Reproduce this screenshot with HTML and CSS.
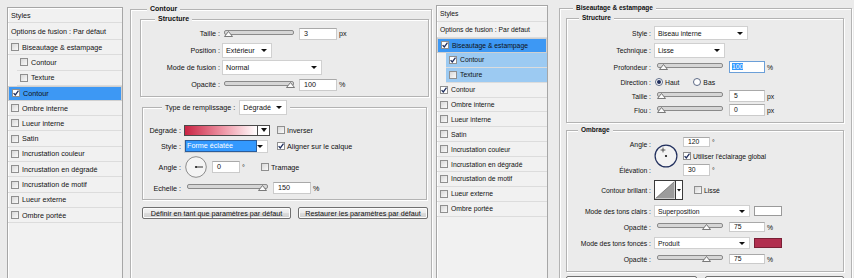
FILE: index.html
```html
<!DOCTYPE html>
<html lang="fr">
<head>
  <meta charset="UTF-8">
  <title>Style de calque</title>
  <link rel="stylesheet" href="styles.css">
</head>
<body>
<div class="screen">

  <!-- Dialogue 1 : Contour -->
  <div class="dialog d1">
    <div class="styles">
      <div class="st-head">Styles</div>
      <div class="st-opt">Options de fusion : Par défaut</div>
      <div class="st-row"><span class="cb"></span>Biseautage &amp; estampage</div>
      <div class="st-row sub"><span class="cb"></span>Contour</div>
      <div class="st-row sub"><span class="cb"></span>Texture</div>
      <div class="st-row sel"><span class="cb on"><svg viewBox="0 0 6 6"><path d="M0.6 3.1 L2.3 5 L5.5 0.7"/></svg></span>Contour</div>
      <div class="st-row"><span class="cb"></span>Ombre interne</div>
      <div class="st-row"><span class="cb"></span>Lueur interne</div>
      <div class="st-row"><span class="cb"></span>Satin</div>
      <div class="st-row"><span class="cb"></span>Incrustation couleur</div>
      <div class="st-row"><span class="cb"></span>Incrustation en dégradé</div>
      <div class="st-row"><span class="cb"></span>Incrustation de motif</div>
      <div class="st-row"><span class="cb"></span>Lueur externe</div>
      <div class="st-row"><span class="cb"></span>Ombre portée</div>
    </div>

    <div class="panel">
      <fieldset class="group outer">
        <legend>Contour</legend>
        <fieldset class="group struct">
          <legend>Structure</legend>
          <div class="form f-s1">
            <label>Taille :</label>
            <div class="ctl">
              <div class="slider w70" style="--v:0"><svg class="thumb" viewBox="0 0 9 6"><polygon points="0.5,5.5 4.5,0.5 8.5,5.5"/></svg></div>
              <span class="field w38">3</span><span class="unit">px</span>
            </div>
            <label>Position :</label>
            <div class="ctl"><span class="sel w50">Extérieur<i class="caret"></i></span></div>
            <label>Mode de fusion :</label>
            <div class="ctl"><span class="sel w100">Normal<i class="caret"></i></span></div>
            <label>Opacité :</label>
            <div class="ctl">
              <div class="slider w70" style="--v:1"><svg class="thumb" viewBox="0 0 9 6"><polygon points="0.5,5.5 4.5,0.5 8.5,5.5"/></svg></div>
              <span class="field w38">100</span><span class="unit">%</span>
            </div>
          </div>
        </fieldset>

        <fieldset class="group fill">
          <legend class="legend-ctl">
            <span class="ctl">Type de remplissage :<span class="sel w48">Dégradé<i class="caret"></i></span></span>
          </legend>
          <div class="form f-fill">
            <label>Dégradé :</label>
            <div class="ctl">
              <span class="grad"></span><span class="dropbtn"><i class="caret"></i></span>
              <span class="cb gap7"></span><span class="opt">Inverser</span>
            </div>
            <label>Style :</label>
            <div class="ctl">
              <span class="sel w84 sel-focus"><span class="hl">Forme éclatée</span><i class="caret"></i></span>
              <span class="cb on gap9"><svg viewBox="0 0 6 6"><path d="M0.6 3.1 L2.3 5 L5.5 0.7"/></svg></span><span class="opt">Aligner sur le calque</span>
            </div>
            <label>Angle :</label>
            <div class="ctl">
              <svg class="dial" width="22" height="22" viewBox="0 0 22 22"><circle cx="11" cy="11" r="10.3" fill="#f4f4f4" stroke="#8d8d8d"/><line x1="11" y1="11" x2="18" y2="11" stroke="#333"/><circle cx="11" cy="11" r="1.1" fill="#222"/></svg>
              <span class="field w28">0</span><span class="unit">°</span>
              <span class="cb gap16"></span><span class="opt">Tramage</span>
            </div>
            <label>Echelle :</label>
            <div class="ctl">
              <div class="slider w81" style="--v:0.98"><svg class="thumb" viewBox="0 0 9 6"><polygon points="0.5,5.5 4.5,0.5 8.5,5.5"/></svg></div>
              <span class="field w38">150</span><span class="unit">%</span>
            </div>
          </div>
        </fieldset>

        <div class="buttons">
          <button class="btn b1">Définir en tant que paramètres par défaut</button>
          <button class="btn b2">Restaurer les paramètres par défaut</button>
        </div>
      </fieldset>
    </div>
  </div>

  <!-- Dialogue 2 : Biseautage & estampage -->
  <div class="dialog d2">
    <div class="styles">
      <div class="st-head">Styles</div>
      <div class="st-opt">Options de fusion : Par défaut</div>
      <div class="st-row sel"><span class="cb on"><svg viewBox="0 0 6 6"><path d="M0.6 3.1 L2.3 5 L5.5 0.7"/></svg></span>Biseautage &amp; estampage</div>
      <div class="st-row sub sel2"><span class="cb on"><svg viewBox="0 0 6 6"><path d="M0.6 3.1 L2.3 5 L5.5 0.7"/></svg></span>Contour</div>
      <div class="st-row sub sel2"><span class="cb"></span>Texture</div>
      <div class="st-row"><span class="cb on"><svg viewBox="0 0 6 6"><path d="M0.6 3.1 L2.3 5 L5.5 0.7"/></svg></span>Contour</div>
      <div class="st-row"><span class="cb"></span>Ombre interne</div>
      <div class="st-row"><span class="cb"></span>Lueur interne</div>
      <div class="st-row"><span class="cb"></span>Satin</div>
      <div class="st-row"><span class="cb"></span>Incrustation couleur</div>
      <div class="st-row"><span class="cb"></span>Incrustation en dégradé</div>
      <div class="st-row"><span class="cb"></span>Incrustation de motif</div>
      <div class="st-row"><span class="cb"></span>Lueur externe</div>
      <div class="st-row"><span class="cb"></span>Ombre portée</div>
    </div>

    <div class="panel">
      <fieldset class="group outer">
        <legend>Biseautage &amp; estampage</legend>
        <fieldset class="group struct">
          <legend>Structure</legend>
          <div class="form f-s2">
            <label>Style :</label>
            <div class="ctl"><span class="sel w94">Biseau interne<i class="caret"></i></span></div>
            <label>Technique :</label>
            <div class="ctl"><span class="sel w71">Lisse<i class="caret"></i></span></div>
            <label>Profondeur :</label>
            <div class="ctl">
              <div class="slider w66" style="--v:0.05"><svg class="thumb" viewBox="0 0 9 6"><polygon points="0.5,5.5 4.5,0.5 8.5,5.5"/></svg></div>
              <span class="field w36 focus"><span class="hl">100</span></span><span class="unit">%</span>
            </div>
            <label>Direction :</label>
            <div class="ctl">
              <span class="radio on"></span><span class="opt r-haut">Haut</span>
              <span class="radio"></span><span class="opt">Bas</span>
            </div>
            <label>Taille :</label>
            <div class="ctl">
              <div class="slider w66" style="--v:0"><svg class="thumb" viewBox="0 0 9 6"><polygon points="0.5,5.5 4.5,0.5 8.5,5.5"/></svg></div>
              <span class="field w36">5</span><span class="unit">px</span>
            </div>
            <label>Flou :</label>
            <div class="ctl">
              <div class="slider w66" style="--v:0"><svg class="thumb" viewBox="0 0 9 6"><polygon points="0.5,5.5 4.5,0.5 8.5,5.5"/></svg></div>
              <span class="field w36">0</span><span class="unit">px</span>
            </div>
          </div>
        </fieldset>

        <fieldset class="group shade">
          <legend>Ombrage</legend>
          <div class="f-angle">
            <label class="lab-angle">Angle :</label>
            <svg class="dial2" width="24" height="24" viewBox="0 0 24 24"><circle cx="12" cy="12" r="10.9" fill="#f3f3f3" stroke="#22305e" stroke-width="1.2"/><circle cx="12" cy="12" r="1.1" fill="#111"/><path d="M9 3.6v4.8M6.6 6h4.8" stroke="#333" stroke-width="0.8"/></svg>
            <div class="ctl"><span class="field w27 h10">120</span><span class="unit">°</span></div>
            <div class="ctl"><span class="cb on"><svg viewBox="0 0 6 6"><path d="M0.6 3.1 L2.3 5 L5.5 0.7"/></svg></span><span class="opt">Utiliser l'éclairage global</span></div>
            <label class="lab-elev">Élévation :</label>
            <div class="ctl"><span class="field w27 h12">30</span><span class="unit">°</span></div>
          </div>
          <div class="form f-om1">
            <label>Contour brillant :</label>
            <div class="ctl">
              <svg class="contour" width="29" height="20" viewBox="0 0 29 20"><rect x="0.5" y="0.5" width="21" height="19" fill="#fff" stroke="#3a3a3a"/><polygon points="1.5,18.5 20.5,1.5 20.5,18.5" fill="#9c9c9c"/><line x1="1.5" y1="18.5" x2="20.5" y2="1.5" stroke="#555" stroke-width="0.6"/><rect x="21.5" y="0.5" width="7" height="19" fill="#fff" stroke="#3a3a3a"/><polygon points="23,9 27,9 25,11.5" fill="#111"/></svg>
              <span class="cb gap11"></span><span class="opt">Lissé</span>
            </div>
          </div>
          <div class="form f-om2">
            <label>Mode des tons clairs :</label>
            <div class="ctl"><span class="sel w96 h12">Superposition<i class="caret"></i></span><span class="swatch white"></span></div>
            <label>Opacité :</label>
            <div class="ctl">
              <div class="slider w66" style="--v:0.78"><svg class="thumb" viewBox="0 0 9 6"><polygon points="0.5,5.5 4.5,0.5 8.5,5.5"/></svg></div>
              <span class="field w36 h10">75</span><span class="unit">%</span>
            </div>
            <label>Mode des tons foncés :</label>
            <div class="ctl"><span class="sel w96 h12">Produit<i class="caret"></i></span><span class="swatch crimson"></span></div>
            <label>Opacité :</label>
            <div class="ctl">
              <div class="slider w66" style="--v:0.78"><svg class="thumb" viewBox="0 0 9 6"><polygon points="0.5,5.5 4.5,0.5 8.5,5.5"/></svg></div>
              <span class="field w36 h10">75</span><span class="unit">%</span>
            </div>
          </div>
        </fieldset>

        <!-- boutons coupés par le bord de la capture -->
        <div class="buttons">
          <button class="btn b3" aria-label="Définir en tant que paramètres par défaut"></button>
          <button class="btn b4" aria-label="Restaurer les paramètres par défaut"></button>
        </div>
      </fieldset>
    </div>
  </div>

</div>
</body>
</html>
```

FILE: styles.css
```css
* {
  box-sizing: border-box;
}

body {
  margin: 0;
  background: #ebebeb;
  font-family: "Liberation Sans", Arial, sans-serif;
  color: #111;
  overflow: hidden;
}

.screen {
  display: flex;
  width: 854px;
  height: 278px;
  overflow: hidden;
}

.dialog {
  display: flex;
  align-items: flex-start;
  height: 278px;
  flex: none;
}

.d1 {
  width: 433px;
  font-size: 7.2px;
}

.d2 {
  width: 421px;
  font-size: 6.8px;
}

/* liste des styles */
.styles {
  align-self: stretch;
  margin-top: 7px;
  margin-left: 7px;
  width: 116px;
  background: #f1f1f1;
  border: 1px solid #a6a6a6;
  border-bottom: none;
  box-shadow: inset 1px 1px 0 #fff;
}

.d2 .styles {
  margin-top: 5px;
  margin-left: 3px;
  width: 112px;
}

.st-head, .st-opt, .st-row {
  display: flex;
  align-items: center;
  gap: 3px;
  padding-left: 3px;
  border-bottom: 1px solid #dcdcdc;
  white-space: nowrap;
}

.st-head {
  height: 15px;
}

.st-opt {
  height: 17px;
}

.st-row {
  height: 15.3px;
}

.d2 .st-head, .d2 .st-opt {
  height: 16px;
}

.d2 .st-row {
  height: 14.9px;
}

.st-row.sub {
  margin-left: 9px;
}

.st-row.sel {
  background: #3d98f4;
}

.st-row.sel2 {
  background: #9ccaf2;
}

/* cases à cocher */
.cb {
  flex: none;
  width: 8px;
  height: 8px;
  border: 1px solid #8f8f8f;
  background: linear-gradient(135deg, #d8d8d8, #fafafa);
  display: flex;
  align-items: center;
  justify-content: center;
}

.cb.on {
  background: #fff;
}

.cb svg {
  width: 6px;
  height: 6px;
  fill: none;
  stroke: #1f2e5e;
  stroke-width: 1.3;
}

.gap7 { margin-left: 7px; }
.gap9 { margin-left: 9px; }
.gap11 { margin-left: 11px; }
.gap16 { margin-left: 16px; }

.opt {
  margin-left: 2px;
  white-space: nowrap;
}

.radio {
  flex: none;
  width: 8px;
  height: 8px;
  margin-left: 1px;
  border: 1px solid #5d6a86;
  border-radius: 50%;
  background: #fff;
  display: flex;
  align-items: center;
  justify-content: center;
}

.radio.on::after {
  content: "";
  width: 4px;
  height: 4px;
  border-radius: 50%;
  background: #1d2c5c;
}

.r-haut {
  margin-right: 13px;
}

/* panneau de droite */
.panel {
  flex: none;
}

.d1 .panel {
  margin-left: 7px;
  width: 302px;
}

.d2 .panel {
  margin-left: 11px;
  width: 293px;
}

.group {
  margin: 0;
  padding: 0;
  min-width: 0;
  border: 1px solid #b3b3b3;
  box-shadow: 1px 1px 0 #fff, inset 1px 1px 0 #fff;
}

.group > legend {
  padding: 0 3px;
  height: 10px;
  line-height: 10px;
  background: #ebebeb;
  font-weight: bold;
  white-space: nowrap;
}

.outer {
  height: 300px;
  border-bottom: none;
}

.d1 .outer {
  margin-top: 4px;
  padding: 0 2px 0 9px;
}

.d1 .outer > legend {
  margin-left: 7px;
  font-size: 7px;
}

.d2 .outer {
  margin-top: 3px;
  padding: 0 7px 0 6px;
}

.d2 .outer > legend {
  margin-left: 7px;
  font-size: 6.5px;
}

.d1 .struct > legend {
  margin-left: 14px;
  font-size: 7px;
}

.d2 .struct > legend {
  margin-left: 12px;
  font-size: 6.5px;
}

.fill {
  margin: 3px 2px 0;
}

.fill > legend.legend-ctl {
  margin-left: 19px;
  height: 15px;
  line-height: normal;
  font-weight: normal;
}

.shade {
  margin-top: 2px;
}

.shade > legend {
  margin-left: 11px;
  font-size: 6.5px;
}

/* grilles de formulaire */
.form {
  display: grid;
  align-items: center;
}

.form > label, .f-angle > label {
  text-align: right;
  white-space: nowrap;
}

.f-s1 {
  grid-template-columns: 79px 1fr;
  column-gap: 2px;
  grid-auto-rows: 17px;
  padding: 1px 0 3px;
}

.f-fill {
  grid-template-columns: 38px 1fr;
  column-gap: 3px;
  grid-template-rows: 16px 16px 26px 16px;
  padding: 7px 0 3px;
}

.f-s2 {
  grid-template-columns: 84px 1fr;
  column-gap: 3px;
  grid-template-rows: 16px 18px 16px 14px 14px 14px;
  padding: 2px 0 5px;
}

.f-angle {
  display: grid;
  grid-template-columns: 84px 26px 1fr;
  column-gap: 3px;
  grid-template-rows: 12px 16px 12px;
  align-items: center;
  padding-top: 1px;
}

.lab-angle {
  grid-column: 1;
  grid-row: 1 / 3;
  align-self: start;
  padding-top: 5px;
}

.dial2 {
  grid-column: 2;
  grid-row: 1 / 4;
  align-self: center;
}

.lab-elev {
  grid-column: 1;
  grid-row: 3;
}

.f-om1 {
  grid-template-columns: 84px 1fr;
  column-gap: 3px;
  grid-template-rows: 20px;
  margin-top: 4px;
}

.f-om2 {
  grid-template-columns: 84px 1fr;
  column-gap: 3px;
  grid-auto-rows: 16px;
  margin-top: 3px;
  padding-bottom: 4px;
}

.ctl {
  display: flex;
  align-items: center;
  white-space: nowrap;
}

.legend-ctl .ctl {
  height: 15px;
  gap: 4px;
}

/* champs */
.field {
  flex: none;
  height: 12px;
  line-height: 10px;
  padding-left: 4px;
  background: #fff;
  border: 1px solid #cbcbcb;
  border-top-color: #a9a9a9;
}

.field.h10 { height: 10px; line-height: 8px; }
.field.h12 { height: 12px; }

.field.focus {
  border-color: #6b9fd8;
  padding-left: 2px;
}

.hl {
  background: #3399ff;
  color: #fff;
}

.unit {
  margin-left: 2px;
}

.w27 { width: 27px; }
.w28 { width: 28px; margin-left: 5px; }
.w36 { width: 36px; margin-left: 6px; }
.w38 { width: 38px; margin-left: 5px; }

.sel {
  flex: none;
  display: flex;
  align-items: center;
  height: 15px;
  padding: 0 4px 0 3px;
  background: #fff;
  border: 1px solid #d0d0d0;
}

.sel.h12 { height: 12px; }

.w48 { width: 48px; }
.w50 { width: 50px; }
.w71 { width: 71px; }
.w84 { width: 84px; height: 13px; padding-left: 1px; }
.w94 { width: 94px; height: 14px; }
.w96 { width: 96px; }
.w100 { width: 100px; }

.sel-focus .hl {
  width: 70px;
  height: 10px;
  line-height: 10px;
  padding-left: 1px;
  outline: 1px solid #2a5c9a;
}

.caret {
  margin-left: auto;
  width: 0;
  height: 0;
  border-left: 3px solid transparent;
  border-right: 3px solid transparent;
  border-top: 3px solid #111;
}

.grad {
  flex: none;
  width: 74px;
  height: 11px;
  border: 1px solid #4a4a4a;
  background: linear-gradient(to right, #c92443, #ef9aa9 55%, #ffffff);
}

.dropbtn {
  flex: none;
  width: 12px;
  height: 11px;
  display: flex;
  align-items: center;
  justify-content: center;
  background: #fff;
  border: 1px solid #4a4a4a;
  border-left: none;
}

.dropbtn .caret {
  margin: 0;
  border-left-width: 3.5px;
  border-right-width: 3.5px;
  border-top-width: 4px;
}

.swatch {
  flex: none;
  width: 28px;
  height: 10px;
  margin-left: 4px;
  border: 1px solid #9a9a9a;
}

.swatch.white { background: #fff; }
.swatch.crimson { background: #b12f4f; border-color: #7a2036; }

/* curseurs */
.slider {
  position: relative;
  flex: none;
  height: 8px;
}

.slider::before {
  content: "";
  display: block;
  height: 3px;
  border: 1px solid #8a8a8a;
  border-radius: 2px;
  background: #d6d6d6;
}

.slider .thumb {
  position: absolute;
  top: 1px;
  left: calc(4px + (100% - 8px) * var(--v));
  width: 9px;
  height: 6px;
  margin-left: -4.5px;
  fill: #fafafa;
  stroke: #6b6b6b;
  stroke-width: 0.9;
}

.w66 { width: 66px; margin-left: 3px; }
.w70 { width: 70px; margin-left: 2px; }
.w81 { width: 81px; margin-left: 3px; }

.dial {
  flex: none;
  margin-left: 1px;
}

/* boutons */
.buttons {
  display: flex;
}

.btn {
  height: 12px;
  padding: 0;
  font: inherit;
  color: inherit;
  border: 1px solid #707070;
  border-radius: 2px;
  background: linear-gradient(#f3f3f3, #ebebeb 50%, #dddddd 50%, #cfcfcf);
  box-shadow: inset 0 0 0 1px #fcfcfc;
  white-space: nowrap;
}

.d1 .buttons {
  margin: 7px 0 0 2px;
  gap: 7px;
}

.b1 { width: 149px; }
.b2 { width: 130px; }

.d2 .buttons {
  margin-top: 4px;
  gap: 8px;
}

.b3 { width: 134px; }
.b4 { width: 142px; }
```
